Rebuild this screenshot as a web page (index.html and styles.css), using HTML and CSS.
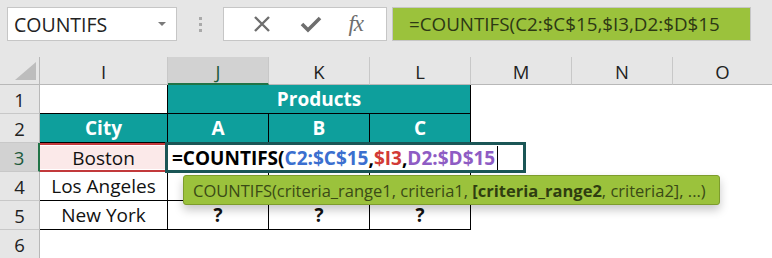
FILE: index.html
```html
<!DOCTYPE html>
<html>
<head>
<meta charset="utf-8">
<link rel="stylesheet" href="styles.css">
</head>
<body>
<div class="toolbar">
  <div class="namebox"><span class="nb-text">COUNTIFS</span><span class="nb-arrow"></span></div>
  <div class="dots"><i></i><i></i><i></i></div>
  <div class="fnbox">
    <svg class="ic" width="22" height="22" viewBox="0 0 22 22"><path d="M4 4 L18 18 M18 4 L4 18" stroke="#6e6e6e" stroke-width="2.4" fill="none"/></svg>
    <svg class="ic" width="24" height="22" viewBox="0 0 24 22"><path d="M3 11 L9 17 L21 5" stroke="#6e6e6e" stroke-width="3.6" fill="none" stroke-linejoin="miter"/></svg>
    <span class="fx">fx</span>
  </div>
  <div class="formula">=COUNTIFS(C2:$C$15,$I3,D2:$D$15</div>
</div>
<div class="sheet">
  <div class="hd corner"><span class="tri"></span></div>
  <div class="hd col">I</div>
  <div class="hd col sel">J</div>
  <div class="hd col">K</div>
  <div class="hd col">L</div>
  <div class="hd col">M</div>
  <div class="hd col">N</div>
  <div class="hd col">O</div>

  <div class="hd row">1</div>
  <div class="c tb-r tb-b"></div>
  <div class="c teal bold span3 tb-r tb-b">Products</div>
  <div class="c"></div><div class="c"></div><div class="c"></div>

  <div class="hd row">2</div>
  <div class="c teal bold tb-r tb-b">City</div>
  <div class="c teal bold tb-r tb-b">A</div>
  <div class="c teal bold tb-r tb-b">B</div>
  <div class="c teal bold tb-r tb-b">C</div>
  <div class="c"></div><div class="c"></div><div class="c"></div>

  <div class="hd row sel">3</div>
  <div class="c ref">Boston</div>
  <div class="c tb-r tb-b"></div>
  <div class="c tb-r tb-b"></div>
  <div class="c tb-r tb-b"></div>
  <div class="c"></div><div class="c"></div><div class="c"></div>

  <div class="hd row">4</div>
  <div class="c tb-r tb-b">Los Angeles</div>
  <div class="c tb-r tb-b"></div>
  <div class="c tb-r tb-b"></div>
  <div class="c tb-r tb-b"></div>
  <div class="c"></div><div class="c"></div><div class="c"></div>

  <div class="hd row">5</div>
  <div class="c tb-r tb-b">New York</div>
  <div class="c bold tb-r tb-b">?</div>
  <div class="c bold tb-r tb-b">?</div>
  <div class="c bold tb-r tb-b">?</div>
  <div class="c"></div><div class="c"></div><div class="c"></div>

  <div class="hd row">6</div>
  <div class="c"></div><div class="c"></div><div class="c"></div><div class="c"></div>
  <div class="c"></div><div class="c"></div><div class="c"></div>

  <div class="editbox"><span class="k">=COUNTIFS(</span><span class="blue">C2:$C$15</span><span class="k">,</span><span class="red">$I3</span><span class="k">,</span><span class="purple">D2:$D$15</span><span class="caret"></span></div>
  <div class="tip"><span>COUNTIFS(criteria_range1, criteria1, <b>[criteria_range2</b>, criteria2], ...)</span></div>
</div>
</body>
</html>
```
FILE: styles.css
```css
* { box-sizing: border-box; }
html, body { margin: 0; padding: 0; }
body {
  width: 772px;
  height: 258px;
  overflow: hidden;
  background: #ffffff;
  font-family: "Open Sans", "Noto Sans", sans-serif;
  color: #000;
}
.toolbar {
  height: 57px;
  background: #e6e6e6;
  display: flex;
  align-items: flex-start;
  padding-top: 7px;
  padding-left: 7px;
}
.namebox {
  width: 170px;
  height: 34px;
  background: #fff;
  border: 1px solid #c6c6c6;
  display: flex;
  align-items: center;
  padding-left: 6px;
  padding-right: 10px;
  justify-content: space-between;
}
.nb-text { font-size: 19.5px; color: #222; }
.nb-arrow {
  width: 0; height: 0;
  border-left: 4px solid transparent;
  border-right: 4px solid transparent;
  border-top: 4px solid #7a7a7a;
}
.dots {
  width: 46px;
  height: 34px;
  display: flex;
  flex-direction: column;
  align-items: center;
  justify-content: center;
  gap: 3px;
}
.dots i { display: block; width: 3px; height: 3px; background: #aaa; }
.fnbox {
  width: 164px;
  height: 34px;
  background: #fff;
  border: 1px solid #c6c6c6;
  display: flex;
  align-items: center;
  justify-content: space-around;
  padding: 0 10px 0 14px;
}
.fx {
  font-family: "Liberation Serif", serif;
  font-style: italic;
  font-size: 23px;
  color: #6e6e6e;
  letter-spacing: -1px;
}
.formula {
  margin-left: 5px;
  width: 359px;
  height: 34px;
  background: #9bc23c;
  border: 1px solid #c6c6c6;
  font-size: 18.8px;
  color: #2d3814;
  display: flex;
  align-items: center;
  padding-left: 16px;
  white-space: nowrap;
  overflow: hidden;
}
.sheet {
  position: relative;
  display: grid;
  grid-template-columns: 40px 128px 101px 101px 101px 101px 101px 100px;
  grid-template-rows: 28px 29px 29px 29px 29px 29px 29px;
}
.hd {
  background: #e6e6e6;
  color: #222;
  font-size: 18.5px;
  display: flex;
  align-items: center;
  justify-content: center;
}
.hd.col { border-right: 1px solid #c8c8c8; border-bottom: 1px solid #b8b8b8; padding-top: 2px; }
.hd.col.sel { background: #d2d2d2; border-bottom: 2px solid #217346; color: #1d5a3c; }
.hd.corner { border-right: 1px solid #b8b8b8; border-bottom: 1px solid #b8b8b8; position: relative; }
.tri {
  position: absolute;
  right: 3px;
  bottom: 4px;
  width: 0; height: 0;
  border-left: 21px solid transparent;
  border-bottom: 18px solid #bdbdbd;
}
.hd.row { border-right: 1px solid #b8b8b8; border-bottom: 1px solid #c8c8c8; }
.hd.row.sel { background: #d2d2d2; border-right: 2px solid #217346; color: #1d5a3c; }
.c {
  background: #fff;
  font-size: 19px;
  display: flex;
  align-items: center;
  justify-content: center;
  white-space: nowrap;
  color: #111;
}
.tb-r { border-right: 1px solid #000; }
.tb-b { border-bottom: 1px solid #000; }
.teal { background: #0e9f9c; color: #fff; }
.bold { font-weight: 700; }
.span3 { grid-column: span 3; }
.ref {
  background: #fbe9e9;
  border-top: 2px solid #c2393b;
  border-bottom: 2px solid #c2393b;
  box-shadow: inset 0 1px 0 #fff, inset 0 -1px 0 #fff;
  border-right: 1px solid #000;
}
.editbox {
  position: absolute;
  left: 165px;
  top: 85px;
  width: 361px;
  height: 31px;
  background: #fff;
  border: 3px solid #1b5656;
  display: flex;
  align-items: center;
  padding-left: 4px;
  font-size: 19px;
  font-weight: 700;
  white-space: nowrap;
}
.k { color: #000; }
.blue { color: #3b6fcf; }
.red { color: #d23a36; }
.purple { color: #8e5cc4; }
.caret { display: inline-block; width: 1px; height: 24px; background: #000; margin-left: 2px; }
.tip {
  position: absolute;
  left: 183px;
  top: 118px;
  width: 537px;
  height: 30px;
  background: #9bc23c;
  border: 1px solid #7d9c2c;
  border-radius: 3px;
  box-shadow: 0 5px 10px rgba(0,0,0,0.22);
  color: #3a4a16;
  font-size: 16.5px;
  display: flex;
  align-items: center;
  padding-left: 9px;
  white-space: nowrap;
}
.tip b { font-weight: 700; color: #2f3d10; }
```
